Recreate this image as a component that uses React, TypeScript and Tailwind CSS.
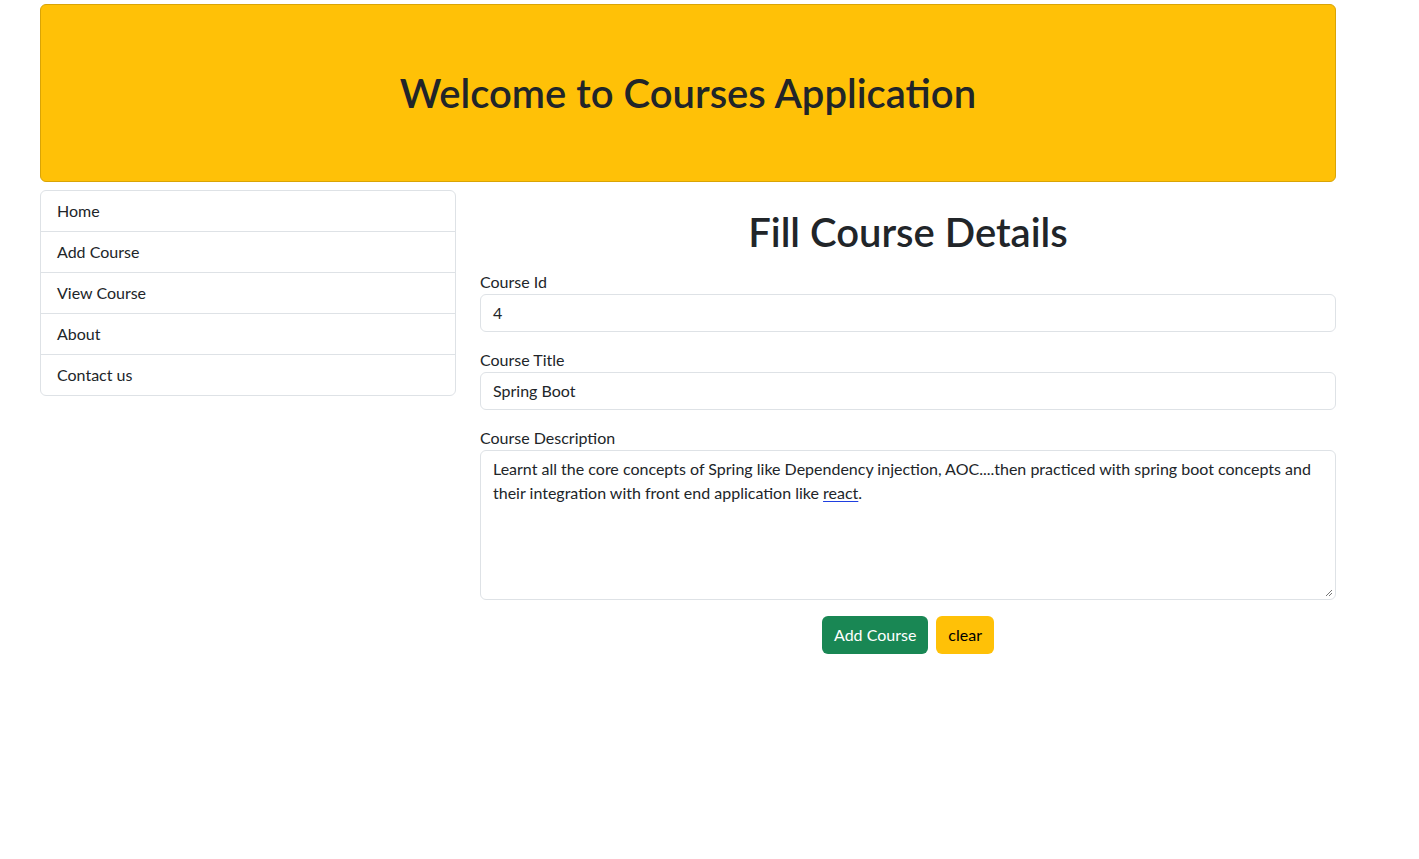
import React from 'react';

const font = { fontFamily: 'Lato, "Open Sans", sans-serif' };

const menu = ['Home', 'Add Course', 'View Course', 'About', 'Contact us'];

const Field = ({ label, value }: { label: string; value: string }) => (
  <div className="mb-4">
    <label className="block text-base leading-6 text-[#212529]">{label}</label>
    <div className="h-[38px] rounded-md border border-[#dee2e6] px-3 flex items-center text-base text-[#212529]">
      {value}
    </div>
  </div>
);

export default function App() {
  return (
    <div className="min-h-[859px] bg-white text-[#212529]" style={font}>
      <div className="ml-[40px] w-[1296px] pt-[4px]">
        {/* Banner */}
        <div className="h-[178px] rounded-md border border-[#d9a406] bg-[#ffc107] flex items-center justify-center">
          <h1 className="text-[40px] font-semibold leading-tight text-[#212529]">Welcome to Courses Application</h1>
        </div>

        <div className="mt-2 flex gap-6">
          {/* Side menu */}
          <div className="w-[416px] shrink-0">
            <div className="rounded-md border border-[#dee2e6]">
              {menu.map((m, i) => (
                <div
                  key={m}
                  className={`px-4 flex items-center text-base text-[#212529] ${i > 0 ? 'h-[41px] border-t border-[#dee2e6]' : 'h-[40px]'}`}
                >
                  {m}
                </div>
              ))}
            </div>
          </div>

          {/* Form */}
          <div className="flex-1 pt-[18px]">
            <h1 className="text-center text-[40px] font-semibold leading-[48px] mb-[14px]">Fill Course Details</h1>
            <Field label="Course Id" value="4" />
            <Field label="Course Title" value="Spring Boot" />
            <div className="mb-4">
              <label className="block text-base leading-6">Course Description</label>
              <div className="relative h-[150px] rounded-md border border-[#dee2e6] px-3 py-[6px] text-base leading-6">
                Learnt all the core concepts of Spring like Dependency injection, AOC....then practiced with spring boot
                concepts and their integration with front end application like{' '}
                <span className="underline decoration-[#1f3fe0] underline-offset-2">react</span>.
                <svg className="absolute right-[2px] bottom-[2px]" width="8" height="8" viewBox="0 0 8 8">
                  <path d="M7 1L1 7M7 4L4 7" stroke="#777" strokeWidth="1" />
                </svg>
              </div>
            </div>
            <div className="flex justify-center gap-2">
              <button className="h-[38px] rounded-md bg-[#198754] px-3 text-base text-white">Add Course</button>
              <button className="h-[38px] rounded-md bg-[#ffc107] px-3 text-base text-black">clear</button>
            </div>
          </div>
        </div>
      </div>
    </div>
  );
}
